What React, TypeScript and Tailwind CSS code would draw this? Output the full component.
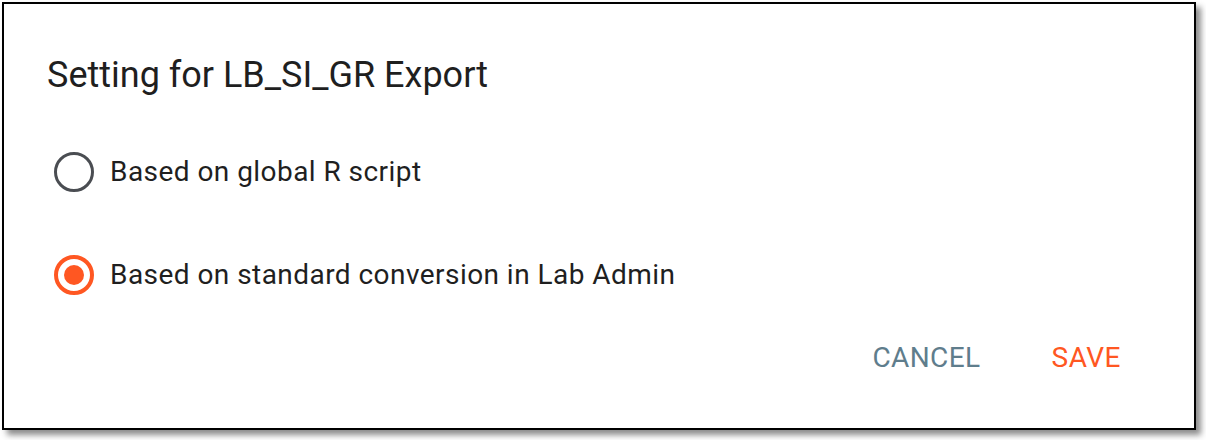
export default function App() {
  return (
    <div className="h-[440px] w-[1206px] bg-white p-[2px] font-['Roboto',sans-serif]">
      <div className="flex h-[428px] w-[1194px] flex-col border-2 border-black bg-white shadow-[5px_5px_6px_rgba(0,0,0,0.45)]">
        <h1 className="pl-[43px] pt-[49px] text-[36px] leading-[44px] font-normal text-[#1f1f1f]">
          Setting for LB_SI_GR Export
        </h1>
        <div className="mt-[55px] flex flex-col gap-[63px] pl-[50px]">
          <label className="flex items-center gap-[16px]">
            <span className="h-[40px] w-[40px] rounded-full border-[3px] border-[#4a4d52]" />
            <span className="text-[28px] leading-[40px] tracking-[0.45px] text-[#1f1f1f]">
              Based on global R script
            </span>
          </label>
          <label className="flex items-center gap-[16px]">
            <span className="flex h-[40px] w-[40px] items-center justify-center rounded-full border-[4px] border-[#ff5722]">
              <span className="h-[20px] w-[20px] rounded-full bg-[#ff5722]" />
            </span>
            <span className="text-[28px] leading-[40px] tracking-[0.45px] text-[#1f1f1f]">
              Based on standard conversion in Lab Admin
            </span>
          </label>
        </div>
        <div className="mt-[43px] flex justify-end gap-[71px] pr-[73px]">
          <button className="text-[28px] leading-[40px] tracking-[0.4px] text-[#5f7d8c]">CANCEL</button>
          <button className="text-[28px] leading-[40px] tracking-[0.5px] text-[#ff5722]">SAVE</button>
        </div>
      </div>
    </div>
  );
}
